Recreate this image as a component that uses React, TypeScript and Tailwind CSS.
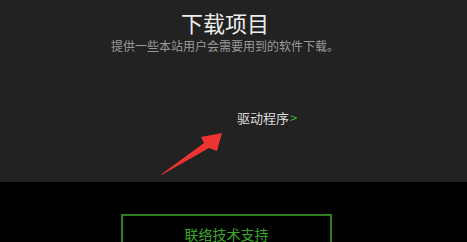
export default function App() {
  return (
    <div className="w-[467px] h-[242px] overflow-hidden bg-black" style={{ fontFamily: '"Noto Sans CJK SC", "Noto Sans", sans-serif' }}>
      {/* Download section */}
      <section className="relative h-[182px] bg-[#222222] pr-[17px] flex flex-col items-center">
        <h1 className="mt-[9px] text-[22px] leading-[26px] text-[#eeeeee] font-normal">下载项目</h1>
        <p className="mt-[4px] text-[12px] leading-[14px] text-[#9a9a9a]">提供一些本站用户会需要用到的软件下载。</p>
        <a className="mt-[57px] ml-[84px] text-[13px] leading-[16px] text-[#dddddd]">
          驱动程序<span className="text-[#3cb82a] ml-[1px]">&gt;</span>
        </a>
        {/* red annotation arrow */}
        <svg className="absolute left-[158px] top-[130px]" width="68" height="48" viewBox="0 0 68 48">
          <path d="M3 44.5 L46 13 L43 7 L64 3 L59 21 L51 18 L3.5 45 Z" fill="#ee3333" />
        </svg>
      </section>
      {/* Support */}
      <div className="flex justify-center pr-[14px] pt-[32px]">
        <button className="w-[211px] h-[40px] border-2 border-[#2f7f1f] text-[#3aa82a] text-[14px] pt-[1px]">
          联络技术支持
        </button>
      </div>
    </div>
  );
}
